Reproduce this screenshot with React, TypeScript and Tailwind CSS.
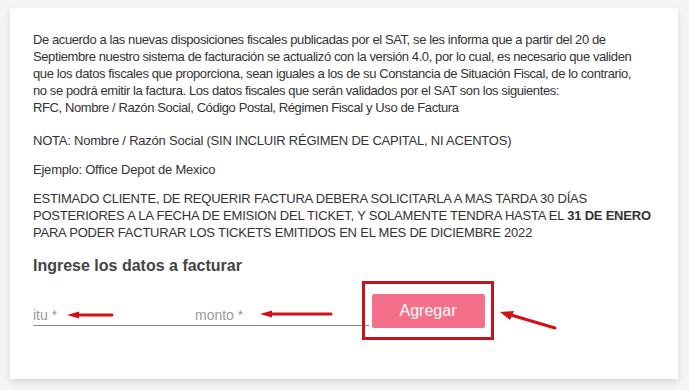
export default function App() {
  return (
    <div className="h-[390px] w-[689px] overflow-hidden bg-[#f4f4f4] pl-[10px] pt-[8px]" style={{ fontFamily: '"Liberation Sans", Arial, sans-serif' }}>
      <div className="h-[371px] w-[668px] bg-white px-[23px] pt-[23px] shadow-[0_3px_6px_rgba(0,0,0,0.12)]">
        <div className="whitespace-nowrap text-[13px] leading-[17px] tracking-[-0.4px] text-[#333]">
          <p className="mb-[16px]">
            De acuerdo a las nuevas disposiciones fiscales publicadas por el SAT, se les informa que a partir del 20 de
            <br />
            Septiembre nuestro sistema de facturación se actualizó con la versión 4.0, por lo cual, es necesario que validen
            <br />
            que los datos fiscales que proporciona, sean iguales a los de su Constancia de Situación Fiscal, de lo contrario,
            <br />
            no se podrá emitir la factura. Los datos fiscales que serán validados por el SAT son los siguientes:
            <br />
            RFC, Nombre / Razón Social, Código Postal, Régimen Fiscal y Uso de Factura
          </p>
          <div className="tracking-[-0.22px]">
            <p className="mb-[12px]">NOTA: Nombre / Razón Social (SIN INCLUIR RÉGIMEN DE CAPITAL, NI ACENTOS)</p>
            <p className="mb-[12px]">Ejemplo: Office Depot de Mexico</p>
            <p>
              ESTIMADO CLIENTE, DE REQUERIR FACTURA DEBERA SOLICITARLA A MAS TARDA 30 DÍAS
              <br />
              POSTERIORES A LA FECHA DE EMISION DEL TICKET, Y SOLAMENTE TENDRA HASTA EL <b>31 DE ENERO</b>
              <br />
              PARA PODER FACTURAR LOS TICKETS EMITIDOS EN EL MES DE DICIEMBRE 2022
            </p>
          </div>
        </div>

        <h2 className="mt-[14px] text-[16px] font-bold leading-[22px] text-[#444]">Ingrese los datos a facturar</h2>

        <div className="mt-[4px] flex items-end">
          <div className="relative flex h-[25px] w-[162px] items-end border-b border-[#8a8a8a] pb-[1px]">
            <span className="text-[14px] leading-[18px] text-[#9a9a9a]">itu *</span>
            <svg className="absolute left-[33px] top-[9px]" width="48" height="10" viewBox="0 0 48 10">
              <path d="M12 5 H46" stroke="#d40f16" strokeWidth="3" strokeLinecap="round" />
              <path d="M1 5 L13 1.5 L13 8.5 Z" fill="#d40f16" />
            </svg>
          </div>
          <div className="relative flex h-[25px] w-[174px] items-end border-b border-[#8a8a8a] pb-[1px]">
            <span className="text-[14px] leading-[18px] text-[#9a9a9a]">monto *</span>
            <svg className="absolute left-[64px] top-[8px]" width="74" height="10" viewBox="0 0 74 10">
              <path d="M12 5 H72" stroke="#d40f16" strokeWidth="3" strokeLinecap="round" />
              <path d="M1 5 L13 1.5 L13 8.5 Z" fill="#d40f16" />
            </svg>
          </div>
          <div className="relative mb-[-14px] ml-[-7px] flex h-[59px] w-[132px] items-center justify-center border-[3px] border-[#c4151c]">
            <button className="h-[34px] w-[113px] rounded-[2px] bg-[#f4708a] text-[16px] text-white">Agregar</button>
            <svg className="absolute left-[132px] top-[26px]" width="62" height="22" viewBox="0 0 62 22">
              <path d="M14 5 L58 18" stroke="#d40f16" strokeWidth="3" strokeLinecap="round" />
              <path d="M3 2 L17 1 L13 10 Z" fill="#d40f16" />
            </svg>
          </div>
        </div>
      </div>
    </div>
  );
}
